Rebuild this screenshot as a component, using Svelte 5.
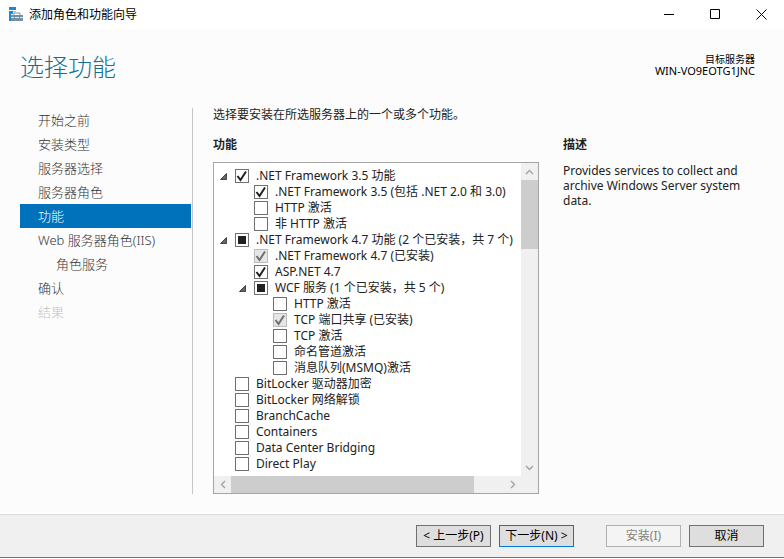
<script>
  const steps = [
    { text: '开始之前' },
    { text: '安装类型' },
    { text: '服务器选择' },
    { text: '服务器角色' },
    { text: '功能', current: true },
    { text: 'Web 服务器角色(IIS)' },
    { text: '角色服务', nested: true },
    { text: '确认' },
    { text: '结果', unavailable: true }
  ];

  let features = $state([
    { text: '.NET Framework 3.5 功能', level: 0, open: true, checked: true },
    { text: '.NET Framework 3.5 (包括 .NET 2.0 和 3.0)', level: 1, checked: true },
    { text: 'HTTP 激活', level: 1 },
    { text: '非 HTTP 激活', level: 1 },
    { text: '.NET Framework 4.7 功能 (2 个已安装，共 7 个)', level: 0, open: true, partial: true },
    { text: '.NET Framework 4.7 (已安装)', level: 1, checked: true, installed: true },
    { text: 'ASP.NET 4.7', level: 1, checked: true },
    { text: 'WCF 服务 (1 个已安装，共 5 个)', level: 1, open: true, partial: true },
    { text: 'HTTP 激活', level: 2 },
    { text: 'TCP 端口共享 (已安装)', level: 2, checked: true, installed: true },
    { text: 'TCP 激活', level: 2 },
    { text: '命名管道激活', level: 2 },
    { text: '消息队列(MSMQ)激活', level: 2 },
    { text: 'BitLocker 驱动器加密', level: 0 },
    { text: 'BitLocker 网络解锁', level: 0 },
    { text: 'BranchCache', level: 0 },
    { text: 'Containers', level: 0 },
    { text: 'Data Center Bridging', level: 0 },
    { text: 'Direct Play', level: 0 }
  ]);
</script>

<div class="window">
  <header class="titlebar">
    <svg class="app-icon" width="14" height="14" viewBox="0 0 14 14" aria-hidden="true">
      <path d="M0 0h7v3H0zM0 4h4v3H2v7H0z" fill="#1e88d2" />
      <path d="M4 4h3v1H4z" fill="#9dcbee" />
      <path d="M5 8.500v-2.500h6v2.500" fill="none" stroke="#7a93a6" />
      <path d="M2 8h12v6H2z" fill="#7390a5" />
      <path d="M2 10.500h3M6 10.500h4M11 10.500h3" stroke="#dfe7ed" />
    </svg>
    <span class="caption">添加角色和功能向导</span>
    <button class="sys" aria-label="最小化">
      <svg width="11" height="11" viewBox="0 0 11 11"><path d="M0 5.500h10" /></svg>
    </button>
    <button class="sys" aria-label="最大化">
      <svg width="11" height="11" viewBox="0 0 11 11"><path d="M.5 .5h9v9h-9z" /></svg>
    </button>
    <button class="sys" aria-label="关闭">
      <svg width="11" height="11" viewBox="0 0 11 11"><path d="M.5 .5l10 10M10.500 .5l-10 10" /></svg>
    </button>
  </header>

  <div class="heading">
    <h1>选择功能</h1>
    <div class="server">
      <p class="server-label">目标服务器</p>
      <p>WIN-VO9EOTG1JNC</p>
    </div>
  </div>

  <div class="body">
    <nav>
      {#each steps as step}
        <a
          href="#step"
          class:current={step.current}
          class:nested={step.nested}
          class:unavailable={step.unavailable}
          aria-current={step.current ? 'step' : undefined}>{step.text}</a>
      {/each}
    </nav>

    <main>
      <p class="intro">选择要安装在所选服务器上的一个或多个功能。</p>
      <section class="features">
        <h2>功能</h2>
        <div class="listbox">
          <div class="tree">
            {#each features as item}
              <div class="row level{item.level}">
                {#if item.open}
                  <button class="toggle" aria-label="折叠">
                    <svg width="7" height="7" viewBox="0 0 7 7"><path d="M6.500 .5v6h-6z" /></svg>
                  </button>
                {:else}
                  <span class="toggle"></span>
                {/if}
                <label>
                  <span class="box">
                    <input
                      type="checkbox"
                      bind:checked={item.checked}
                      indeterminate={item.partial}
                      disabled={item.installed} />
                    <svg width="14" height="14" viewBox="0 0 14 14" aria-hidden="true">
                      <path class="tick" d="M2.500 7l3 4 5.500-8.500" />
                      <path class="square" d="M3 3h8v8H3z" />
                    </svg>
                  </span>
                  {item.text}
                </label>
              </div>
            {/each}
          </div>
          <div class="vbar">
            <button class="arrow" aria-label="向上滚动">
              <svg width="9" height="6" viewBox="0 0 9 6"><path d="M1 5l3.500-3.500L8 5" /></svg>
            </button>
            <div class="thumb"></div>
            <button class="arrow last" aria-label="向下滚动">
              <svg width="9" height="6" viewBox="0 0 9 6"><path d="M1 1l3.500 3.500L8 1" /></svg>
            </button>
          </div>
          <div class="hbar">
            <button class="arrow" aria-label="向左滚动">
              <svg width="6" height="9" viewBox="0 0 6 9"><path d="M5 1L1.500 4.500 5 8" /></svg>
            </button>
            <div class="thumb"></div>
            <button class="arrow last" aria-label="向右滚动">
              <svg width="6" height="9" viewBox="0 0 6 9"><path d="M1 1l3.500 3.500L1 8" /></svg>
            </button>
          </div>
        </div>
      </section>
      <section class="description">
        <h2>描述</h2>
        <p>Provides services to collect and archive Windows Server system data.</p>
      </section>
    </main>
  </div>

  <footer>
    <button>&lt; 上一步(P)</button>
    <button class="default">下一步(N) &gt;</button>
    <button class="group" disabled>安装(I)</button>
    <button>取消</button>
  </footer>
</div>

<style>
  :global(body) {
    margin: 0;
    background: #fff;
  }
  .window {
    box-sizing: border-box;
    min-height: 100vh;
    display: flex;
    flex-direction: column;
    padding-bottom: 1px;
    background: #fcfcfc linear-gradient(#fff, #fff) bottom / 100% 1px no-repeat;
    color: #222;
    font: 12px/16px 'Noto Sans', 'Noto Sans CJK SC', sans-serif;
  }
  h1, h2, p {
    margin: 0;
  }
  button {
    font: inherit;
    color: inherit;
    padding: 0;
    margin: 0;
    border: 0;
    background: none;
  }
  .titlebar {
    display: flex;
    align-items: center;
    height: 29px;
    padding-left: 9px;
    background: #fff;
    color: #000;
  }
  .app-icon {
    margin: 0 6px 2px 0;
  }
  .caption {
    flex: 1;
  }
  .sys {
    display: grid;
    place-items: center;
    width: 46px;
    height: 28px;
  }
  .sys svg {
    fill: none;
    stroke: #000;
  }
  .heading {
    display: flex;
    justify-content: space-between;
    align-items: flex-start;
    height: 55px;
    padding: 24px 29px 0 20px;
  }
  h1 {
    color: #12718f;
    font-size: 24px;
    line-height: 28px;
    font-weight: 300;
  }
  .server {
    color: #000;
    font-size: 11px;
    line-height: 12px;
    text-align: right;
  }
  .server-label {
    font-size: 10px;
  }
  .body {
    flex: 1;
    display: flex;
    padding-bottom: 20px;
  }
  nav {
    box-sizing: border-box;
    width: 193px;
    padding: 0 1px 0 20px;
    border-right: 1px solid #c6c6c6;
  }
  nav a {
    display: block;
    padding-left: 18px;
    color: #333;
    font-size: 13px;
    line-height: 24px;
    font-weight: 300;
    text-decoration: none;
  }
  nav a.nested {
    padding-left: 36px;
  }
  nav a.current {
    background: #0072bc;
    color: #fff;
  }
  nav a.unavailable {
    color: #c4c4c4;
  }
  main {
    flex: 1;
    display: grid;
    grid-template-columns: 326px 1fr;
    grid-template-rows: 29px 1fr;
    column-gap: 24px;
    padding: 0 32px 0 20px;
  }
  .intro {
    grid-column: 1 / -1;
    line-height: 14px;
  }
  h2 {
    font-size: 12px;
    line-height: 16px;
    font-weight: 700;
  }
  .features {
    display: flex;
    flex-direction: column;
    gap: 9px;
  }
  .description {
    display: flex;
    flex-direction: column;
    gap: 10px;
  }
  .description p {
    line-height: 15px;
  }
  .listbox {
    flex: 1;
    display: grid;
    grid-template-columns: 1fr 17px;
    grid-template-rows: 1fr 17px;
    border: 1px solid #a5a5a5;
    background: #fff;
  }
  .tree {
    padding: 5px 0 4px 6px;
    overflow: hidden;
  }
  .row {
    display: flex;
    align-items: center;
    height: 16px;
    white-space: nowrap;
  }
  .level1 {
    padding-left: 19px;
  }
  .level2 {
    padding-left: 38px;
  }
  .toggle {
    width: 15px;
    height: 16px;
    display: flex;
    align-items: center;
  }
  .toggle path {
    fill: #666;
    stroke: #444;
  }
  label {
    display: flex;
    align-items: center;
    gap: 7px;
  }
  .box {
    display: grid;
    width: 14px;
    height: 14px;
  }
  .box > * {
    grid-area: 1 / 1;
  }
  .box svg {
    pointer-events: none;
  }
  .box path {
    display: none;
  }
  input {
    appearance: none;
    box-sizing: border-box;
    width: 14px;
    height: 14px;
    margin: 0;
    border: 1px solid #707070;
    background: #fff;
  }
  input:disabled {
    border-color: #bcbcbc;
    background: #e6e6e6;
  }
  .tick {
    fill: none;
    stroke: #212121;
    stroke-width: 2;
  }
  input:disabled + svg .tick {
    stroke: #707070;
  }
  input:checked + svg .tick,
  input:indeterminate + svg .square {
    display: block;
  }
  .square {
    fill: #212121;
  }
  .vbar,
  .hbar {
    display: flex;
    background: #f0f0f0;
  }
  .vbar {
    flex-direction: column;
  }
  .hbar {
    grid-column: 1 / -1;
    padding-right: 17px;
  }
  .arrow {
    display: grid;
    place-items: center;
    width: 17px;
    height: 17px;
  }
  .arrow path {
    fill: none;
    stroke: #a3a3a3;
    stroke-width: 1.4;
  }
  .last {
    margin: auto 0 0 auto;
  }
  .thumb {
    background: #cdcdcd;
  }
  .vbar .thumb {
    height: 22%;
  }
  .hbar .thumb {
    width: 79%;
  }
  footer {
    display: flex;
    justify-content: flex-end;
    gap: 8px;
    padding: 10px 20px;
    border-top: 1px solid #dcdcdc;
    border-bottom: 1px solid #707070;
    background: #f0f0f0;
    color: #000;
  }
  footer button {
    box-sizing: border-box;
    width: 75px;
    height: 22px;
    border: 1px solid #707070;
    background: #dedede;
    line-height: 20px;
    white-space: nowrap;
  }
  footer .default {
    border-color: #0078d7;
  }
  footer .group {
    margin-left: 24px;
  }
  footer button:disabled {
    border-color: #adb2b5;
    background: #f4f4f4;
    color: #838383;
  }
</style>
